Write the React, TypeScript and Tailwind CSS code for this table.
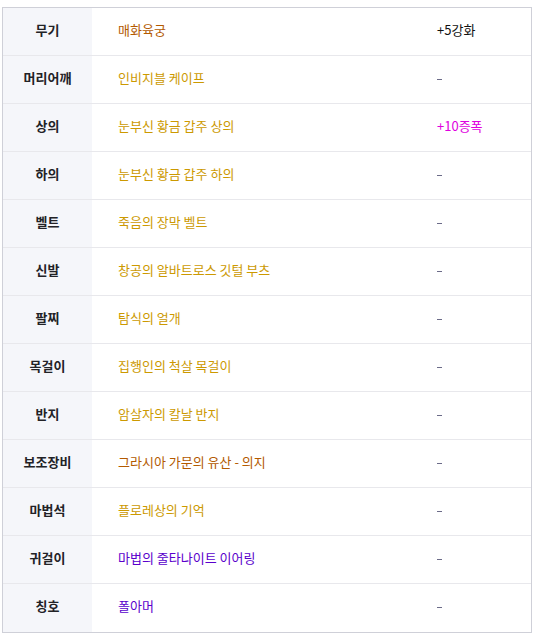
const rows: { slot: string; name: string; color: string; extra: string; extraColor?: string }[] = [
  { slot: '무기', name: '매화육궁', color: 'text-[#b35a00]', extra: '+5강화', extraColor: 'text-[#111111]' },
  { slot: '머리어깨', name: '인비지블 케이프', color: 'text-[#cc9900]', extra: '-' },
  { slot: '상의', name: '눈부신 황금 갑주 상의', color: 'text-[#cc9900]', extra: '+10증폭', extraColor: 'text-[#e000e0]' },
  { slot: '하의', name: '눈부신 황금 갑주 하의', color: 'text-[#cc9900]', extra: '-' },
  { slot: '벨트', name: '죽음의 장막 벨트', color: 'text-[#cc9900]', extra: '-' },
  { slot: '신발', name: '창공의 알바트로스 깃털 부츠', color: 'text-[#cc9900]', extra: '-' },
  { slot: '팔찌', name: '탐식의 얼개', color: 'text-[#cc9900]', extra: '-' },
  { slot: '목걸이', name: '집행인의 척살 목걸이', color: 'text-[#cc9900]', extra: '-' },
  { slot: '반지', name: '암살자의 칼날 반지', color: 'text-[#cc9900]', extra: '-' },
  { slot: '보조장비', name: '그라시아 가문의 유산 - 의지', color: 'text-[#b35a00]', extra: '-' },
  { slot: '마법석', name: '플로레상의 기억', color: 'text-[#cc9900]', extra: '-' },
  { slot: '귀걸이', name: '마법의 줄타나이트 이어링', color: 'text-[#5a00cc]', extra: '-' },
  { slot: '칭호', name: '폴아머', color: 'text-[#5a00cc]', extra: '-' },
];

export default function App() {
  return (
    <div className="bg-white w-[535px] h-[634px] pt-[7px] pl-[2px] font-['Noto_Sans_CJK_KR',sans-serif]">
      <div className="w-[530px] border border-[#cfd0d8]">
        {rows.map((r, i) => (
          <div
            key={r.slot}
            className={`grid grid-cols-[89px_345px_94px] h-[48px] ${i < rows.length - 1 ? 'border-b border-[#e8e8ec]' : ''}`}
          >
            <div className="bg-[#f5f6fa] flex items-center justify-center pb-[4px] text-[13px] font-bold text-[#222226]">
              {r.slot}
            </div>
            <div className={`flex items-center pl-[26px] pb-[4px] text-[13px] ${r.color}`}>{r.name}</div>
            <div className={`flex items-center pb-[4px] text-[13px] ${r.extraColor ?? 'text-[#6b6b88]'}`}>
              {r.extra === '-' ? <span className="inline-block w-[5px] h-px bg-[#6b6b88] mt-[3px]" /> : r.extra}
            </div>
          </div>
        ))}
      </div>
    </div>
  );
}
